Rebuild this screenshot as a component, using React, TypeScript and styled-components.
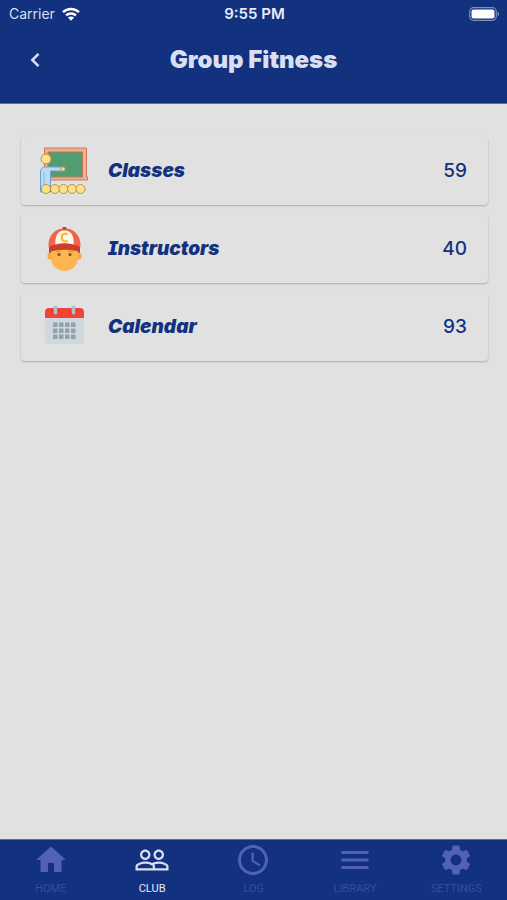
import React from 'react';
import styled, { createGlobalStyle } from 'styled-components';
import { MdAccessTime, MdHome, MdMenu, MdPeopleOutline, MdSettings } from 'react-icons/md';

const GlobalStyle = createGlobalStyle`
  * { box-sizing: border-box; }
  body { margin: 0; background: #e1e1e1; }
`;

const Screen = styled.div`
  min-height: 100vh;
  display: flex;
  flex-direction: column;
  background: #e1e1e1;
  color: #12317f;
  font-family: Inter, sans-serif;
`;

const Top = styled.header`
  background: #12317f;
  border-bottom: 1px solid #5b70a6;
  color: #d9dff0;
`;

const StatusBar = styled.div`
  height: 28px;
  padding: 0 7px 0 9px;
  display: grid;
  grid-template-columns: 1fr auto 1fr;
  align-items: center;
  font-size: 14px;
  line-height: 28px;
`;

const Carrier = styled.div`
  display: flex;
  align-items: center;
  gap: 7px;
`;

const Time = styled.time`
  font-size: 15px;
  font-weight: 600;
  color: #e8ecf6;
`;

const Battery = styled.div`
  display: flex;
  justify-content: flex-end;
`;

const TitleBar = styled.div`
  height: 75px;
  padding: 0 19px 12px;
  display: grid;
  grid-template-columns: 32px 1fr 32px;
  align-items: center;
`;

const BackButton = styled.button`
  width: 32px;
  height: 32px;
  padding: 0;
  border: 0;
  background: none;
  color: inherit;
  display: grid;
  place-items: center;
  cursor: pointer;
`;

const Title = styled.h1`
  margin: 0;
  text-align: center;
  font-size: 24px;
  line-height: 32px;
  font-weight: 900;
`;

const List = styled.main`
  flex: 1;
  padding: 32px 19px 32px 21px;
  display: flex;
  flex-direction: column;
  gap: 9px;
`;

const Card = styled.button`
  width: 100%;
  height: 69px;
  padding: 0 21px 0 16px;
  border: 0;
  border-radius: 4px;
  background: #e1e1e1;
  box-shadow: 0 1px 2px rgba(0, 0, 0, 0.24);
  color: inherit;
  font-family: inherit;
  display: flex;
  align-items: center;
  text-align: left;
  cursor: pointer;
`;

const Picture = styled.span`
  width: 56px;
  height: 56px;
  margin-right: 15px;
  flex: none;
`;

const Label = styled.span`
  flex: 1;
  font-size: 19px;
  font-weight: 900;
  font-style: italic;
  font-feature-settings: 'cv08';
`;

const Count = styled.span`
  font-size: 19px;
  font-weight: 500;
`;

const TabBar = styled.nav`
  height: 61px;
  border-top: 1px solid #5b70a6;
  background: #12317f;
  display: grid;
  grid-template-columns: repeat(5, 1fr);
`;

const Tab = styled.a<{ $active?: boolean }>`
  display: flex;
  flex-direction: column;
  align-items: center;
  padding-top: 2px;
  gap: 4px;
  text-decoration: none;
  color: ${(p) => (p.$active ? '#d9dff0' : '#5360b8')};
`;

const TabLabel = styled.span<{ $active?: boolean }>`
  font-family: Roboto, sans-serif;
  font-size: 11px;
  line-height: 14px;
  color: ${(p) => (p.$active ? '#e8ecf6' : '#3b4a9e')};
`;

const WifiIcon = () => (
  <svg width="18" height="14" viewBox="0 0 18 14" fill="none" stroke="#fff" strokeWidth="2.4" aria-hidden="true">
    <path d="M1 5.2C5.5.9 12.5.9 17 5.2M4 8.4c2.8-2.6 7.2-2.6 10 0" />
    <path d="M9 13.8 5.9 10.6c1.7-1.6 4.5-1.6 6.2 0Z" fill="#fff" stroke="none" />
  </svg>
);

const BatteryIcon = () => (
  <svg width="31" height="14" viewBox="0 0 31 14" aria-hidden="true">
    <rect x=".7" y=".7" width="26.6" height="12.6" rx="4" fill="none" stroke="#7f90bd" strokeWidth="1.2" />
    <rect x="2.5" y="2.5" width="23" height="9" rx="2" fill="#fff" />
    <path d="M28.6 4.8c2.2 1 2.2 3.4 0 4.4Z" fill="#7f90bd" />
  </svg>
);

const BackIcon = () => (
  <svg width="12" height="16" viewBox="0 0 12 16" fill="none" stroke="currentColor" strokeWidth="2.5" aria-hidden="true">
    <path d="M9.5 1.8 3.3 8l6.2 6.2" />
  </svg>
);

const ClassesPicture = () => (
  <svg viewBox="0 0 56 56" aria-hidden="true">
    <path d="M7.5 5h42v29h1v3h-43z" fill="#efb18f" stroke="#cb7a58" />
    <path d="M11 9h34.5v25H11z" fill="#529c72" stroke="#b67859" />
    <path d="M3.500 49V29q0-5 5-5H25v4H13.500V49z" fill="#b8dcf4" stroke="#719fc9" />
    <path d="M7 29v14" stroke="#8db9dc" />
    <circle cx="26" cy="26" r="2.200" fill="#ffe18a" stroke="#b29649" />
    <circle cx="9" cy="16" r="5" fill="#ffe18a" stroke="#b89445" />
    {[9, 18, 26.5, 35, 43.5].map((x) => (
      <circle key={x} cx={x} cy="46" r="4.500" fill="#ffe18a" stroke="#b89445" />
    ))}
  </svg>
);

const InstructorPicture = () => (
  <svg viewBox="0 0 56 56" aria-hidden="true">
    <path d="M12 25h31v9H12z" fill="#57525a" />
    <ellipse cx="13" cy="35" rx="2.500" ry="3.500" fill="#f7aa42" />
    <ellipse cx="42" cy="35" rx="2.500" ry="3.500" fill="#f7aa42" />
    <path d="M14 26h27v11c0 8-7 13-13.500 13S14 45 14 37Z" fill="#fdb64f" />
    <path d="M11.500 26C11 15 17 7.500 27.500 7.500S44 15 43.500 26Z" fill="#f06449" />
    <path d="M18.500 25c-1-9 1.500-15.500 9-15.500S37.500 16 36.500 25Z" fill="#fff7ef" />
    <rect x="25.500" y="6" width="4" height="2.500" rx="1" fill="#cc3d2c" />
    <path d="M12 31v-5c10-5 21-5 31 0v5c-10-3-21-3-31 0Z" fill="#cf3d29" />
    <path d="M30.500 13.800c-1.500-2-5.800-1.500-5.800 2.700s4.300 4.900 5.800 2.800" fill="none" stroke="#f7bd29" strokeWidth="2.200" />
    <circle cx="22" cy="33.500" r="1.600" fill="#8a4a2e" />
    <circle cx="33" cy="33.500" r="1.600" fill="#8a4a2e" />
    <path d="M19 31q3-1.500 5 0M31 31q3-1.500 5 0" fill="none" stroke="#df8b35" />
  </svg>
);

const CalendarPicture = () => (
  <svg viewBox="0 0 56 56" aria-hidden="true">
    <path d="M8 18h39v24q0 3-3 3H11q-3 0-3-3z" fill="#cfd8dc" />
    <path d="M8 19v-6q0-4 4-4h31q4 0 4 4v6z" fill="#f44336" />
    {[18.5, 36.5].map((x) => (
      <g key={x}>
        <circle cx={x} cy="12" r="3" fill="#b92c27" />
        <rect x={x - 2} y="6.500" width="4" height="9" rx="2" fill="#b0bec5" />
      </g>
    ))}
    {[23.5, 29.5, 35.5].map((y) =>
      [16, 22, 28, 34].map((x) => (
        <rect key={`${x}-${y}`} x={x} y={y} width="4.500" height="4.500" fill="#90a4ae" />
      )),
    )}
  </svg>
);

const sections = [
  { label: 'Classes', count: 59, Drawing: ClassesPicture },
  { label: 'Instructors', count: 40, Drawing: InstructorPicture },
  { label: 'Calendar', count: 93, Drawing: CalendarPicture },
];

const tabs = [
  { label: 'HOME', Icon: MdHome },
  { label: 'CLUB', Icon: MdPeopleOutline, active: true },
  { label: 'LOG', Icon: MdAccessTime },
  { label: 'LIBRARY', Icon: MdMenu },
  { label: 'SETTINGS', Icon: MdSettings },
];

export default function App() {
  return (
    <Screen>
      <GlobalStyle />
      <Top>
        <StatusBar>
          <Carrier>
            Carrier
            <WifiIcon />
          </Carrier>
          <Time>9:55 PM</Time>
          <Battery>
            <BatteryIcon />
          </Battery>
        </StatusBar>
        <TitleBar>
          <BackButton type="button" aria-label="Back">
            <BackIcon />
          </BackButton>
          <Title>Group Fitness</Title>
        </TitleBar>
      </Top>
      <List>
        {sections.map(({ label, count, Drawing }) => (
          <Card key={label} type="button">
            <Picture>
              <Drawing />
            </Picture>
            <Label>{label}</Label>
            <Count>{count}</Count>
          </Card>
        ))}
      </List>
      <TabBar>
        {tabs.map(({ label, Icon, active }) => (
          <Tab key={label} href="#" $active={active} aria-current={active ? 'page' : undefined}>
            <Icon size={36} />
            <TabLabel $active={active}>{label}</TabLabel>
          </Tab>
        ))}
      </TabBar>
    </Screen>
  );
}
